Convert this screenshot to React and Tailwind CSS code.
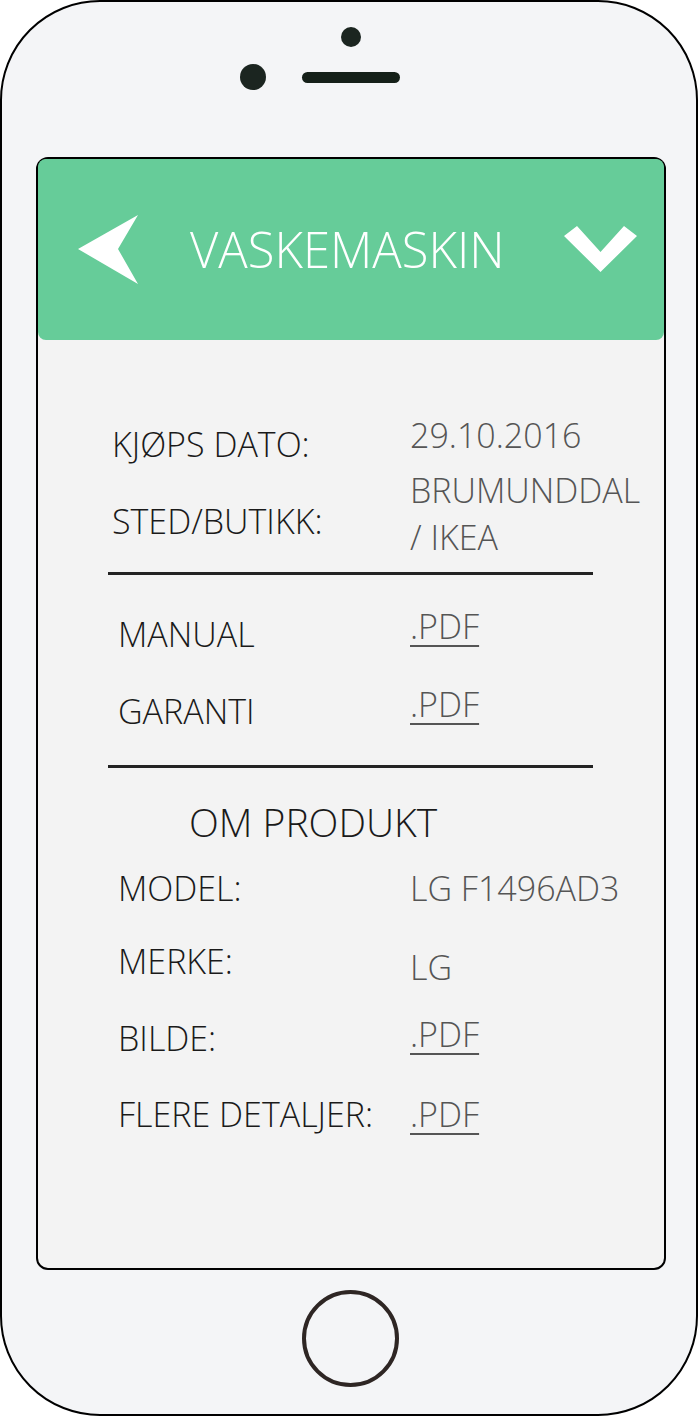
import React from "react";

const label = "text-[34px] leading-none font-light text-[#1a1a1a] whitespace-nowrap";
const value = "text-[34px] leading-none font-light text-[#555555] whitespace-nowrap";
const pdf = "text-[34px] leading-none font-light text-[#555555] underline decoration-2 underline-offset-[6px]";

function Row({ name, children, nameTop = 0, valueTop = 0, mt, indent = 80, col = 292 }) {
  return (
    <div className="flex items-start" style={{ marginTop: mt }}>
      <div className={label} style={{ marginLeft: indent, width: col, marginTop: nameTop }}>
        {name}
      </div>
      <div style={{ marginTop: valueTop }}>{children}</div>
    </div>
  );
}

export default function App() {
  return (
    <div className="w-[699px] h-[1417px] bg-white font-['Open_Sans',sans-serif]">
      <div className="w-[698px] h-[1416px] border-2 border-black rounded-[100px] bg-[#f4f5f7] flex flex-col items-center overflow-hidden">
        {/* camera + speaker */}
        <div className="mt-[25px] ml-[4px] w-[20px] h-[20px] rounded-full bg-[#1b2520]" />
        <div className="mt-[17px] h-[26px] w-full grid grid-cols-[1fr_98px_1fr] items-center ml-[4px]">
          <div className="flex justify-end pr-[36px]">
            <div className="w-[26px] h-[26px] rounded-full bg-[#1b2520]" />
          </div>
          <div className="h-[11px] rounded-full bg-[#152019]" />
          <div />
        </div>

        {/* screen */}
        <div className="self-start ml-[34px] mt-[67px] w-[630px] h-[1113px] border-2 border-black rounded-[12px] bg-[#f3f3f3] flex flex-col">
          <div className="h-[181px] rounded-[8px] bg-[#66cc99] flex items-center pl-[40px]">
            <svg width="60" height="69" viewBox="0 0 60 69">
              <polygon points="0,34 60,0 40,34 60,69" fill="#ffffff" />
            </svg>
            <span className="ml-[52px] text-[49px] leading-none font-light text-white">
              VASKEMASKIN
            </span>
            <svg className="ml-auto mr-[27px]" width="73" height="47" viewBox="0 0 73 47">
              <polygon points="0,10 13,0 36.5,26 60,0 73,10 36.5,46" fill="#ffffff" />
            </svg>
          </div>

          {/* purchase info */}
          <Row name="KJØPS DATO:" mt={78} nameTop={9} indent={74} col={298}>
            <div className={value}>29.10.2016</div>
          </Row>
          <Row name="STED/BUTIKK:" mt={12} nameTop={31} indent={74} col={298}>
            <div className={value}>BRUMUNDDAL</div>
            <div className={`${value} mt-[13px]`}>/ IKEA</div>
          </Row>

          <div className="ml-[70px] mt-[18px] w-[485px] h-[3px] bg-[#222222]" />

          <Row name="MANUAL" mt={34} nameTop={8}>
            <span className={pdf}>.PDF</span>
          </Row>
          <Row name="GARANTI" mt={36} nameTop={7}>
            <span className={pdf}>.PDF</span>
          </Row>

          <div className="ml-[70px] mt-[37px] w-[485px] h-[3px] bg-[#222222]" />

          {/* product */}
          <div className="ml-[151px] mt-[34px] text-[39px] leading-none font-light text-[#1a1a1a]">OM PRODUKT</div>
          <Row name="MODEL:" mt={30}>
            <div className={value}>LG F1496AD3</div>
          </Row>
          <Row name="MERKE:" mt={39} valueTop={6}>
            <div className={value}>LG</div>
          </Row>
          <Row name="BILDE:" mt={33} nameTop={4}>
            <span className={pdf}>.PDF</span>
          </Row>
          <Row name="FLERE DETALJER:" mt={42}>
            <span className={pdf}>.PDF</span>
          </Row>
        </div>

        {/* home button */}
        <div className="mt-[20px] ml-[2px] w-[97px] h-[97px] rounded-full border-4 border-[#2e2624]" />
      </div>
    </div>
  );
}
